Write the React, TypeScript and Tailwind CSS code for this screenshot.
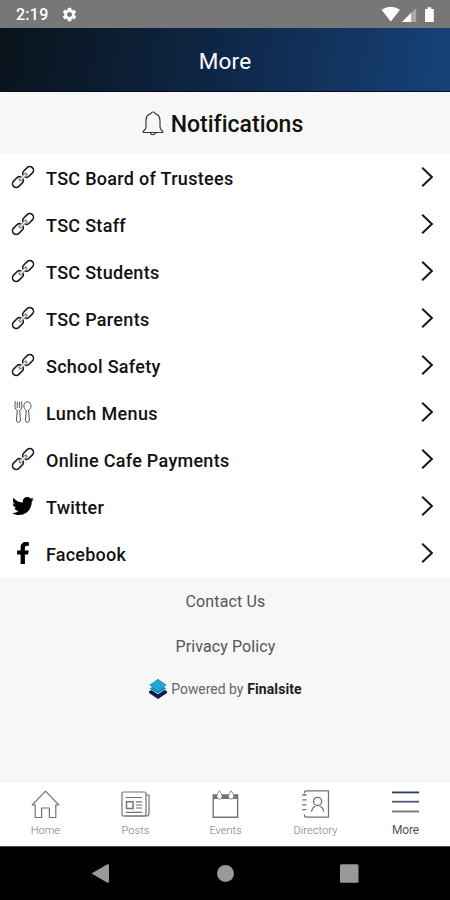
import React from 'react';
import { FaFacebookF, FaTwitter } from 'react-icons/fa';
import { MdSettings } from 'react-icons/md';

type IconName = 'link' | 'lunch' | 'twitter' | 'facebook';

interface MenuItem {
  label: string;
  icon: IconName;
  width: number;
}

const menuItems: MenuItem[] = [
  { label: 'TSC Board of Trustees', icon: 'link', width: 187.5 },
  { label: 'TSC Staff', icon: 'link', width: 80 },
  { label: 'TSC Students', icon: 'link', width: 113.5 },
  { label: 'TSC Parents', icon: 'link', width: 103.5 },
  { label: 'School Safety', icon: 'link', width: 114.5 },
  { label: 'Lunch Menus', icon: 'lunch', width: 112 },
  { label: 'Online Cafe Payments', icon: 'link', width: 183.5 },
  { label: 'Twitter', icon: 'twitter', width: 58 },
  { label: 'Facebook', icon: 'facebook', width: 80 },
];

// Single line of text stretched to a known width
const Label: React.FC<{ text: string; width: number; size: number; className?: string }> = ({ text, width, size, className }) => {
  const ref = React.useRef<HTMLSpanElement>(null);
  const [spacing, setSpacing] = React.useState(0);

  React.useLayoutEffect(() => {
    if (ref.current) {
      setSpacing((width - ref.current.getBoundingClientRect().width) / text.length);
    }
  }, [text, width]);

  return (
    <span ref={ref} className={`inline-block whitespace-nowrap ${className ?? ''}`} style={{ fontSize: size, letterSpacing: spacing }}>
      {text}
    </span>
  );
};

const LinkIcon = () => (
  <svg width="24" height="24" viewBox="0 0 24 24" fill="none" stroke="#1c1c1c" strokeWidth="1.6" strokeLinecap="round">
    <g transform="rotate(-45 12 12)">
      <path d="M10.2 14.2Q9.4 15.7 7.2 15.7H2.4A3.7 3.7 0 0 1 2.4 8.3H7.2Q9.4 8.3 10.2 9.8" />
      <path d="M13.8 9.8Q14.6 8.3 16.8 8.3H21.6A3.7 3.7 0 0 1 21.6 15.7H16.8Q14.6 15.7 13.8 14.2" />
      <path d="M7.5 10.9H16.5M7.5 13.1H16.5M7.5 10.9Q6.2 12 7.5 13.1M16.5 10.9Q17.8 12 16.5 13.1" stroke="#555" strokeWidth="0.9" />
    </g>
  </svg>
);

const LunchIcon = () => (
  <svg width="24" height="24" viewBox="0 0 24 24" fill="none" stroke="#555" strokeWidth="1" strokeLinejoin="round">
    <path d="M4 1.8V7.2Q4 9.4 6.3 10.3L5.4 20Q5.5 22.4 7.4 22.4T9.4 20L8.7 10.3Q10.8 9.4 10.8 7.2V1.8M6.3 1.8V8M8.6 1.8V8" />
    <path d="M4 1.8H4.9M10 1.8H10.8" />
    <path d="M16.4 1.8C14.1 1.8 12.9 3.8 12.9 6.1C12.9 8.2 13.8 9.6 15.3 10.1L14.4 20Q14.5 22.4 16.4 22.4T18.4 20L17.5 10.1C19 9.6 19.9 8.2 19.9 6.1C19.9 3.8 18.7 1.8 16.4 1.8Z" />
  </svg>
);

const RowIcon: React.FC<{ name: IconName }> = ({ name }) => {
  switch (name) {
    case 'link': return <LinkIcon />;
    case 'lunch': return <LunchIcon />;
    case 'twitter': return <FaTwitter size={22} />;
    case 'facebook': return <FaFacebookF size={22} />;
  }
};

const StatusBar = () => (
  <div className="h-7 shrink-0 bg-[#777] text-white flex items-center justify-between pl-4 pr-[15px]">
    <div className="flex items-center gap-[12px]">
      <Label text="2:19" width={32.5} size={16} className="pt-[2px] font-medium" />
      <MdSettings size={17} />
    </div>
    <svg width="54" height="18" viewBox="0 0 54 18" fill="#fff">
      <path d="M0.5 4.7Q9.7 -1.2 19 4.7L9.8 16.5Z" />
      <path d="M35.2 3V17H21Z" fill="#aaa" />
      <path d="M30 8V17H21Z" />
      <path d="M44 4H46.5V2.2H50.3V4H52.8V17H44Z" />
    </svg>
  </div>
);

const HomeIcon = () => (
  <svg width="30" height="30" viewBox="0 0 30 30" fill="none" stroke="#737373" strokeWidth="1.2" strokeLinejoin="round">
    <path d="M15.5 1.2L2.2 15H5.2V27.5H11.6V18H19.4V27.5H25.8V15H28.8Z" />
  </svg>
);

const PostsIcon = () => (
  <svg width="30" height="30" viewBox="0 0 30 30" fill="none" stroke="#737373" strokeWidth="1.2">
    <rect x="2" y="2" width="24" height="24" rx="1.5" />
    <path d="M26 5H29V23.5Q29 26 26 26H4.5M5.8 7.5H22.2M5.8 22.3H22.2M16 11.9H22.2M16 15H22.2M16 18H22.2" />
    <rect x="6.5" y="11.7" width="6.5" height="6.8" strokeWidth="1.5" />
  </svg>
);

const EventsIcon = () => (
  <svg width="30" height="30" viewBox="0 0 30 30" fill="none" stroke="#737373" strokeWidth="1.4">
    <path d="M3.2 5H27.6V27.2H3.2Z" />
    <path d="M3.2 5H27.6V9H3.2Z" fill="#737373" stroke="none" />
    <path d="M9.5 0.8Q12.4 4 12.2 6.7Q12 9.2 9.5 9.2T6.8 6.7Q6.6 4 9.5 0.8ZM21.2 0.8Q24.1 4 23.9 6.7Q23.7 9.2 21.2 9.2T18.5 6.7Q18.3 4 21.2 0.8Z" fill="#fff" strokeWidth="0.8" />
  </svg>
);

const DirectoryIcon = () => (
  <svg width="30" height="30" viewBox="0 0 30 30" fill="none" stroke="#737373" strokeWidth="1.3">
    <path d="M4.5 3.5V2.5Q4.5 0.8 6.5 0.8H28.5V27.2H6.5Q4.5 27.2 4.5 25.5V24.5" />
    <path d="M2.2 5H6.5M2.2 9.9H6.5M2.2 14.8H6.5M2.2 19.7H6.5" />
    <circle cx="17.6" cy="11.4" r="4.1" />
    <path d="M11.6 21.7Q11.9 17 15.6 16.3M19.6 16.3Q23.3 17 23.6 21.7" />
  </svg>
);

const MenuIcon = () => (
  <svg width="30" height="30" viewBox="0 0 30 30" strokeWidth="1.8">
    <path d="M2 2.4H29" stroke="#28385a" />
    <path d="M2 11.7H29" stroke="#4c5977" />
    <path d="M2 21.5H29" stroke="#70747d" />
  </svg>
);

const tabs = [
  { label: 'Home', icon: HomeIcon, width: 30.5, active: false },
  { label: 'Posts', icon: PostsIcon, width: 29, active: false },
  { label: 'Events', icon: EventsIcon, width: 33, active: false },
  { label: 'Directory', icon: DirectoryIcon, width: 45, active: false },
  { label: 'More', icon: MenuIcon, width: 28, active: true },
];

export default function App() {
  return (
    <div className="w-[450px] h-[900px] flex flex-col overflow-hidden bg-[#f7f7f7] font-['Roboto',sans-serif] text-[#111]">
      <StatusBar />

      <header className="h-16 shrink-0 flex items-center justify-center border-b border-[#050827] bg-linear-[100deg] from-[#09131b] via-[#0e2747] to-[#16427a] text-white pt-[5px]">
        <Label text="More" width={52.5} size={22.5} />
      </header>

      <div className="h-[62px] shrink-0 flex items-center justify-center gap-[7px] pr-[5px]">
        <svg width="22" height="25" viewBox="0 0 22 25" fill="none" stroke="#333" strokeWidth="1.1" strokeLinejoin="round">
          <path d="M9 2.6Q9 1 11 1T13 2.6C16.8 3.4 18 6.2 18 10V15.5C18 18 19 19.2 20.8 20.2V21.5H1.2V20.2C3 19.2 4 18 4 15.5V10C4 6.2 5.2 3.4 9 2.6Z" />
          <path d="M8.3 21.7Q9 23.7 11 23.7T13.7 21.7" />
        </svg>
        <h1 className="flex pt-[5px]"><Label text="Notifications" width={132} size={23} className="font-medium" /></h1>
      </div>

      <ul className="h-[424px] shrink-0 grid grid-rows-9 bg-white">
        {menuItems.map((item) => (
          <li key={item.label} className="flex items-center pl-[11px] pr-[16px] pb-[2px]">
            <span className="w-6 shrink-0 flex justify-center text-black"><RowIcon name={item.icon} /></span>
            <span className="flex-1 flex pl-[11px] pt-[3px]">
              <Label text={item.label} width={item.width} size={18} className="font-medium" />
            </span>
            <svg width="14" height="22" viewBox="0 0 14 22" fill="none" stroke="#151515" strokeWidth="2">
              <path d="M2.2 1.7L11.9 11L2.2 20.3" />
            </svg>
          </li>
        ))}
      </ul>

      <footer className="flex-1 flex flex-col items-center text-[#555]">
        <a className="h-[45px] flex items-center pl-px pt-[2px]"><Label text="Contact Us" width={80} size={16} /></a>
        <a className="h-[45px] flex items-center pl-px pt-[2px]"><Label text="Privacy Policy" width={100} size={16} /></a>
        <div className="h-[42px] flex items-center gap-[4px] pl-px">
          <svg width="18" height="20" viewBox="0 0 18 20">
            <path d="M0 12.3L2.5 11L9 15.2L15.5 11L18 12.3V14L9 20L0 14Z" fill="#101c4c" />
            <path d="M9 0L17.5 6L14.8 8L17.5 9.5L9 14.5L0.5 9.5L3.2 8L0.5 6Z" fill="#168fbd" />
            <path d="M9 0L17.5 6L9 12L0.5 6Z" fill="#24a5d0" />
          </svg>
          <span className="flex gap-[4px]">
            <Label text="Powered by" width={72} size={14} className="text-[#666]" />
            <Label text="Finalsite" width={54.5} size={14} className="font-bold text-[#202020]" />
          </span>
        </div>
      </footer>

      <nav className="h-[65px] shrink-0 grid grid-cols-5 bg-white border-t border-[#f0f0f0]">
        {tabs.map(({ label, icon: Icon, width, active }) => (
          <button key={label} className="flex flex-col items-center pt-[8px]">
            <Icon />
            <Label text={label} width={width} size={active ? 12 : 11} className={active ? 'pl-px leading-5 text-[#555]' : 'pl-px leading-[22px] font-light text-[#777]'} />
          </button>
        ))}
      </nav>

      <div className="h-[54px] shrink-0 flex items-center justify-center bg-black border-t border-[#555]">
        <svg width="270" height="22" viewBox="0 0 270 22" fill="#999">
          <path d="M1.5 10.5L17 1.5Q19 0.5 19 2.5V18.5Q19 20.5 17 19.5Z" />
          <circle cx="135.5" cy="10.5" r="8.5" />
          <rect x="250" y="1.2" width="18.5" height="18.5" rx="1.5" />
        </svg>
      </div>
    </div>
  );
}
